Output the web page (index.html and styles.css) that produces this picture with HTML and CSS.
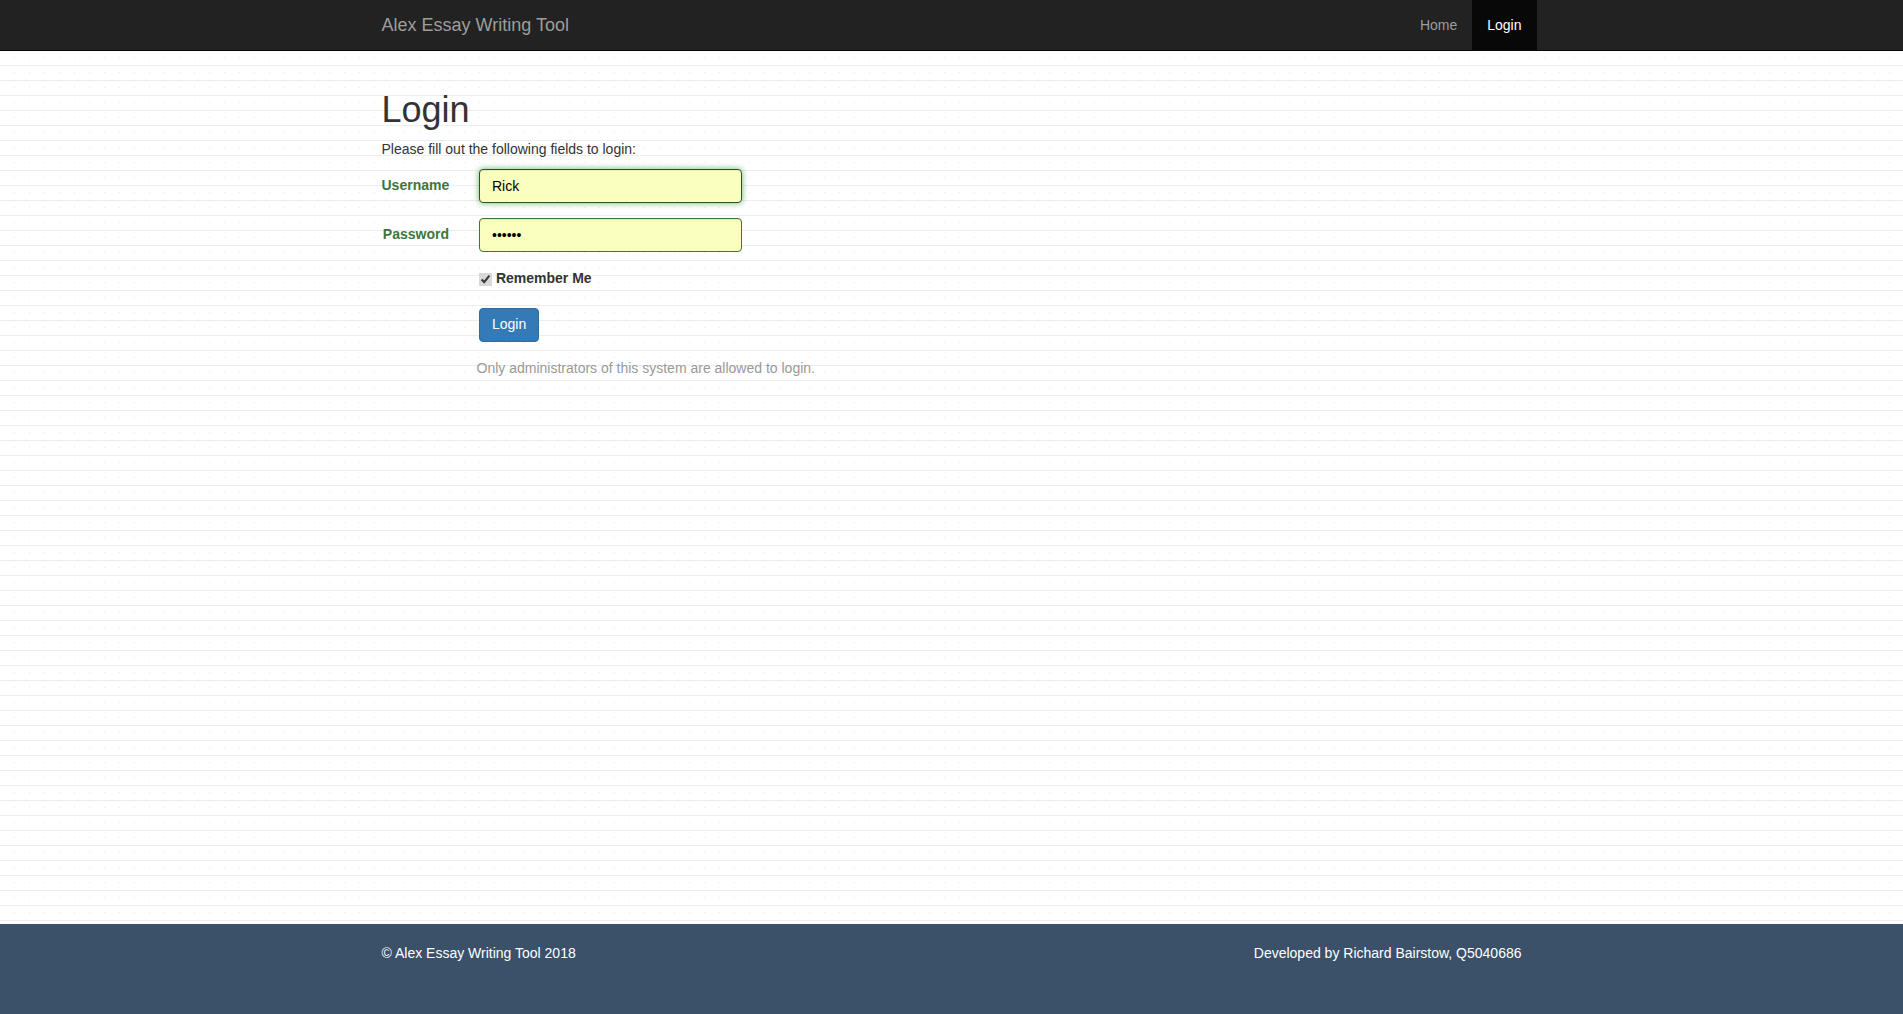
FILE: index.html
```html
<!DOCTYPE html>
<html lang="en">
<head>
<meta charset="utf-8">
<title>Login - Alex Essay Writing Tool</title>
<link rel="stylesheet" href="styles.css">
</head>
<body>
<header class="navbar">
  <div class="container navbar-inner">
    <a class="brand" href="#">Alex Essay Writing Tool</a>
    <ul class="nav">
      <li><a href="#">Home</a></li>
      <li class="active"><a href="#">Login</a></li>
    </ul>
  </div>
</header>

<main class="container content">
  <h1>Login</h1>
  <p class="intro">Please fill out the following fields to login:</p>

  <form class="login-form">
    <div class="form-group">
      <label class="control-label" for="username">Username</label>
      <div class="field"><input id="username" class="form-control focused" type="text" value="Rick"></div>
    </div>
    <div class="form-group">
      <label class="control-label" for="password">Password</label>
      <div class="field"><input id="password" class="form-control" type="password" value="secret"></div>
    </div>
    <div class="form-group check-group">
      <div class="offset">
        <input id="remember" class="check" type="checkbox" checked> <label for="remember" class="check-label">Remember Me</label>
      </div>
    </div>
    <div class="form-group">
      <div class="offset">
        <button type="button" class="btn">Login</button>
      </div>
    </div>
  </form>

  <div class="note">Only administrators of this system are allowed to login.</div>
</main>

<footer class="footer">
  <div class="container footer-inner">
    <p>&copy; Alex Essay Writing Tool 2018</p>
    <p>Developed by Richard Bairstow, Q5040686</p>
  </div>
</footer>
</body>
</html>
```

FILE: styles.css
```css
* { box-sizing: border-box; }

html, body { height: 100%; }

body {
  margin: 0;
  font-family: "Liberation Sans", Arial, Helvetica, sans-serif;
  font-size: 14px;
  line-height: 1.42857;
  color: #333;
  background-color: #fff;
  background-image:
    linear-gradient(to bottom, transparent 5px, #ededed 5px, #ededed 6px, transparent 6px),
    radial-gradient(circle at 14.5px 12.5px, #e8e8e8 0, #e8e8e8 0.6px, transparent 1px);
  background-size: 100% 15px, 15px 15px;
  display: flex;
  flex-direction: column;
  min-height: 100vh;
}

.container {
  width: 1170px;
  margin: 0 auto;
  padding: 0 15px;
}

/* Navbar */
.navbar {
  background: #222;
  border-bottom: 1px solid #080808;
  height: 51px;
  flex: none;
}
.navbar-inner {
  display: flex;
  justify-content: space-between;
  align-items: stretch;
  height: 50px;
}
.brand {
  color: #9d9d9d;
  font-size: 18px;
  line-height: 20px;
  padding: 15px 0;
  text-decoration: none;
}
.nav {
  list-style: none;
  margin: 0 -15px 0 0;
  padding: 0;
  display: flex;
}
.nav a {
  display: block;
  padding: 15px;
  line-height: 20px;
  color: #9d9d9d;
  text-decoration: none;
}
.nav .active a {
  background: #080808;
  color: #fff;
}

/* Content */
.content {
  flex: 1 0 auto;
  padding-top: 19px;
}
h1 {
  font-size: 36px;
  font-weight: 500;
  line-height: 1.1;
  margin: 20px 0 10px;
  color: #333;
}
.intro {
  margin: 0 0 9px;
}

.form-group {
  display: flex;
  margin: 0 -15px 15px;
}
.control-label {
  width: 97.5px;
  padding: 7px 15px 0;
  text-align: right;
  white-space: nowrap;
  font-weight: bold;
  color: #3c763d;
  flex: none;
}
.field {
  width: 292.5px;
  padding: 0 15px;
  flex: none;
}
.form-control {
  display: block;
  width: 100%;
  height: 34px;
  padding: 6px 12px;
  font-family: inherit;
  font-size: 14px;
  line-height: 1.42857;
  color: #000;
  background-color: #faffbd;
  border: 1px solid #3c763d;
  border-radius: 4px;
  box-shadow: inset 0 1px 1px rgba(0,0,0,.075);
  outline: none;
}
.form-control.focused {
  border-color: #2b542c;
  box-shadow: inset 0 1px 1px rgba(0,0,0,.075), 0 0 6px #67b168;
}

.offset {
  padding-left: 112.5px;
}
.check-group {
  min-height: 25px;
  padding-top: 2px;
  margin-bottom: 14px;
}
.check {
  margin: 4px 0 0;
  width: 13px;
  height: 13px;
  vertical-align: top;
  accent-color: #d9d9d9;
}
.check-label {
  display: inline-block;
  font-weight: bold;
  margin-bottom: 5px;
  color: #333;
}

.btn {
  display: inline-block;
  padding: 6px 12px;
  font-family: inherit;
  font-size: 14px;
  line-height: 1.42857;
  color: #fff;
  background-color: #337ab7;
  border: 1px solid #2e6da4;
  border-radius: 4px;
  cursor: pointer;
}

.note {
  margin-left: 95px;
  padding-top: 2px;
  color: #999;
}

/* Footer */
.footer {
  flex: none;
  height: 90px;
  background: #3b5069;
  color: #fff;
  padding-top: 20px;
}
.footer-inner {
  display: flex;
  justify-content: space-between;
}
.footer p {
  margin: 0;
}
```
